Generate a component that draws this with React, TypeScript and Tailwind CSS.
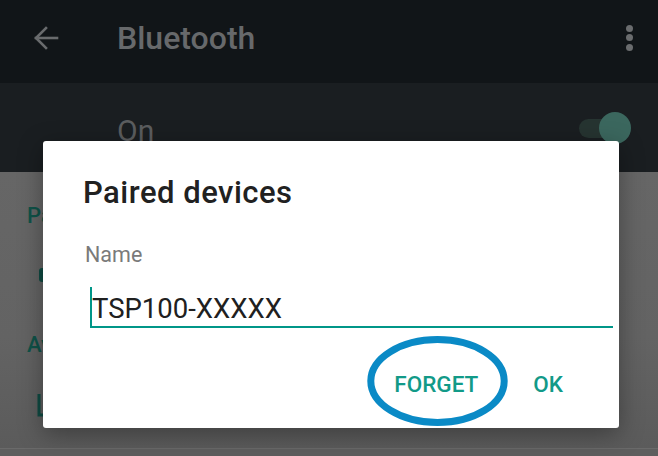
import React from "react";

export default function App() {
  const font = { fontFamily: "Roboto, 'Noto Sans', sans-serif" };
  return (
    <div className="relative w-[658px] h-[456px] overflow-hidden bg-[#636363]" style={font}>
      <div className="flex flex-col h-full">
        {/* Toolbar */}
        <div className="h-[83px] bg-[#111518] flex items-center shrink-0">
          <div className="w-[117px] flex items-center pl-[33px] pb-[8px]">
            <svg width="26" height="26" viewBox="0 0 26 26" fill="none" stroke="#696b6d" strokeWidth="2.6" strokeLinecap="square">
              <path d="M24 13H3" />
              <path d="M13 3L3 13l10 10" />
            </svg>
          </div>
          <div className="flex-1 text-[32px] leading-none font-medium text-[#67696b] pb-[7px]">Bluetooth</div>
          <div className="w-[62px] flex flex-col items-center gap-[2.5px] pb-[8px] pl-[4px]">
            <span className="w-[7px] h-[7px] rounded-full bg-[#6a6c6e]" />
            <span className="w-[7px] h-[7px] rounded-full bg-[#6a6c6e]" />
            <span className="w-[7px] h-[7px] rounded-full bg-[#6a6c6e]" />
          </div>
        </div>
        {/* On band */}
        <div className="h-[89px] bg-[#1a1e21] flex items-start shrink-0 pt-[33px] pl-[117px] pr-[27px]">
          <div className="flex-1 text-[30px] leading-none text-[#5b5d5f]">On</div>
          <div className="relative w-[52px] h-[32px] -mt-[4px]">
            <div className="absolute left-[0px] top-[7px] w-[40px] h-[19px] rounded-full bg-[#263431]" />
            <div className="absolute right-[0px] top-0 w-[32px] h-[32px] rounded-full bg-[#3b675e]" />
          </div>
        </div>
        {/* Dimmed list */}
        <div className="flex-1 flex flex-col pl-[27px] pt-[33px] border-b border-[#6a6a6a] bg-[linear-gradient(180deg,#666_0%,#636363_60%,#5b5b5b_100%)]">
          <div className="text-[22px] leading-none font-medium text-[#0f5248]">Paired devices</div>
          <div className="pl-[12px] mt-[41px]">
            <div className="w-[14px] h-[14px] rounded-[3px] bg-[#0f4a42]" />
          </div>
          <div className="text-[22px] leading-none font-medium text-[#0f5248] mt-[52px]">Available devices</div>
          <div className="pl-[9px] mt-[37px]">
            <svg width="24" height="24" viewBox="0 0 24 24" fill="none" stroke="#0f4a42" strokeWidth="3">
              <path d="M3 1v21h20" />
            </svg>
          </div>
        </div>
        <div className="h-[7px] bg-[#5e5e5e] shrink-0" />
      </div>

      {/* Dialog */}
      <div className="absolute left-[43px] top-[141px] w-[576px] h-[287px] bg-white rounded-[3px] shadow-[0_6px_24px_rgba(0,0,0,0.35)] flex flex-col">
        <div className="pl-[40px] pt-[36px] text-[31px] leading-none font-medium tracking-[0.5px] text-[#212121]">Paired devices</div>
        <div className="pl-[42px] pt-[36px] text-[21.5px] leading-none text-[#7a7a7a]">Name</div>
        <div className="relative ml-[47px] mr-[6px] mt-[21px] border-b-2 border-[#009688] pb-[4px]">
          <div className="absolute left-0 top-0 bottom-0 w-[2px] bg-[#009688]" />
          <div className="pl-[2px] pt-[8px] text-[27.5px] leading-none text-[#202020]">TSP100-XXXXX</div>
        </div>
        <div className="flex justify-end items-start pt-[45px] pr-[56px] gap-[55px] text-[22.5px] leading-none font-medium text-[#129a88]">
          <span>FORGET</span>
          <span>OK</span>
        </div>
      </div>

      {/* Annotation ellipse */}
      <svg className="absolute left-[364px] top-[333px]" width="148" height="96" viewBox="0 0 148 96">
        <ellipse cx="73.5" cy="48" rx="66.7" ry="41.5" fill="none" stroke="#0a8ac6" strokeWidth="7" />
      </svg>
    </div>
  );
}
